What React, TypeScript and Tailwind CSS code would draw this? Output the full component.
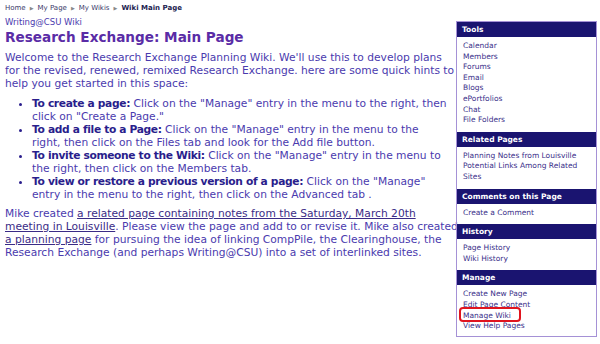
import React from "react";

const Arrow = () => <span className="mx-[4px] text-[5px] text-[#888] align-middle">▶</span>;

function Section({ title, items, highlight }: { title: string; items: string[]; highlight?: string }) {
  return (
    <div>
      <div className="bg-[#1a1470] text-white font-bold h-[15px] leading-[15px] px-[5px] text-[7.5px]">{title}</div>
      <div className="px-[6px] pt-[4px] pb-[6px]">
        {items.map((it) => (
          <div key={it} className="leading-[10.6px] text-[7.5px] text-[#3a2f8a]">
            {it === highlight ? (
              <span className="relative">
                {it}
                <span className="absolute left-[-4px] top-[-4px] w-[62px] h-[15px] border-2 border-[#e0141e] rounded-[4px]"></span>
              </span>
            ) : (
              it
            )}
          </div>
        ))}
      </div>
    </div>
  );
}

export default function App() {
  const bold = "font-bold text-[#2a1e8c] tracking-[-0.35px]";
  const link = "underline text-[#3a2b86]";
  return (
    <div className="w-[600px] h-[344px] bg-white flex overflow-hidden" style={{ fontFamily: '"DejaVu Sans", Verdana, sans-serif' }}>
      <div className="w-[456px] pl-[5px] pt-[4px] text-[#4a3aae] whitespace-nowrap">
        <div className="text-[7px] leading-[9px] text-[#3a3a6a] flex items-center">
          <span>Home</span><Arrow /><span>My Page</span><Arrow /><span>My Wikis</span><Arrow /><span className="font-bold text-[#222250]">Wiki Main Page</span>
        </div>
        <div className="text-[8.5px] leading-[12px] mt-[3px] text-[#4a3aae]">Writing@CSU Wiki</div>
        <div className="text-[13.6px] leading-[16px] font-bold text-[#5a2ca6] mt-[1px]">Research Exchange: Main Page</div>
        <div className="text-[10.7px] leading-[13px] mt-[6px]">
          <p>Welcome to the Research Exchange Planning Wiki. We'll use this to develop plans<br />for the revised, renewed, remixed Research Exchange. here are some quick hints to<br />help you get started in this space:</p>
          <ul className="mt-[7px] pl-[27px] list-disc marker:text-[#2a1e8c]">
            <li><span className={bold}>To create a page:</span> Click on the "Manage" entry in the menu to the right, then<br />click on "Create a Page."</li>
            <li><span className={bold}>To add a file to a Page:</span> Click on the "Manage" entry in the menu to the<br />right, then click on the Files tab and look for the Add file button.</li>
            <li><span className={bold}>To invite someone to the Wiki:</span> Click on the "Manage" entry in the menu to<br />the right, then click on the Members tab.</li>
            <li><span className={bold}>To view or restore a previous version of a page:</span> Click on the "Manage"<br />entry in the menu to the right, then click on the Advanced tab .</li>
          </ul>
          <p className="mt-[6px]">Mike created <span className={link}>a related page containing notes from the Saturday, March 20th<br />meeting in Louisville</span>. Please view the page and add to or revise it. Mike also created<br /><span className={link}>a planning page</span> for pursuing the idea of linking CompPile, the Clearinghouse, the<br />Research Exchange (and perhaps Writing@CSU) into a set of interlinked sites.</p>
        </div>
      </div>
      <div className="mt-[21px] w-[141px] h-[316px] border border-[#a591d6] flex flex-col">
        <Section title="Tools" items={["Calendar", "Members", "Forums", "Email", "Blogs", "ePortfolios", "Chat", "File Folders"]} />
        <Section title="Related Pages" items={["Planning Notes from Louisville", "Potential Links Among Related", "Sites"]} />
        <Section title="Comments on this Page" items={["Create a Comment"]} />
        <Section title="History" items={["Page History", "Wiki History"]} />
        <Section title="Manage" items={["Create New Page", "Edit Page Content", "Manage Wiki", "View Help Pages"]} highlight="Manage Wiki" />
      </div>
    </div>
  );
}
